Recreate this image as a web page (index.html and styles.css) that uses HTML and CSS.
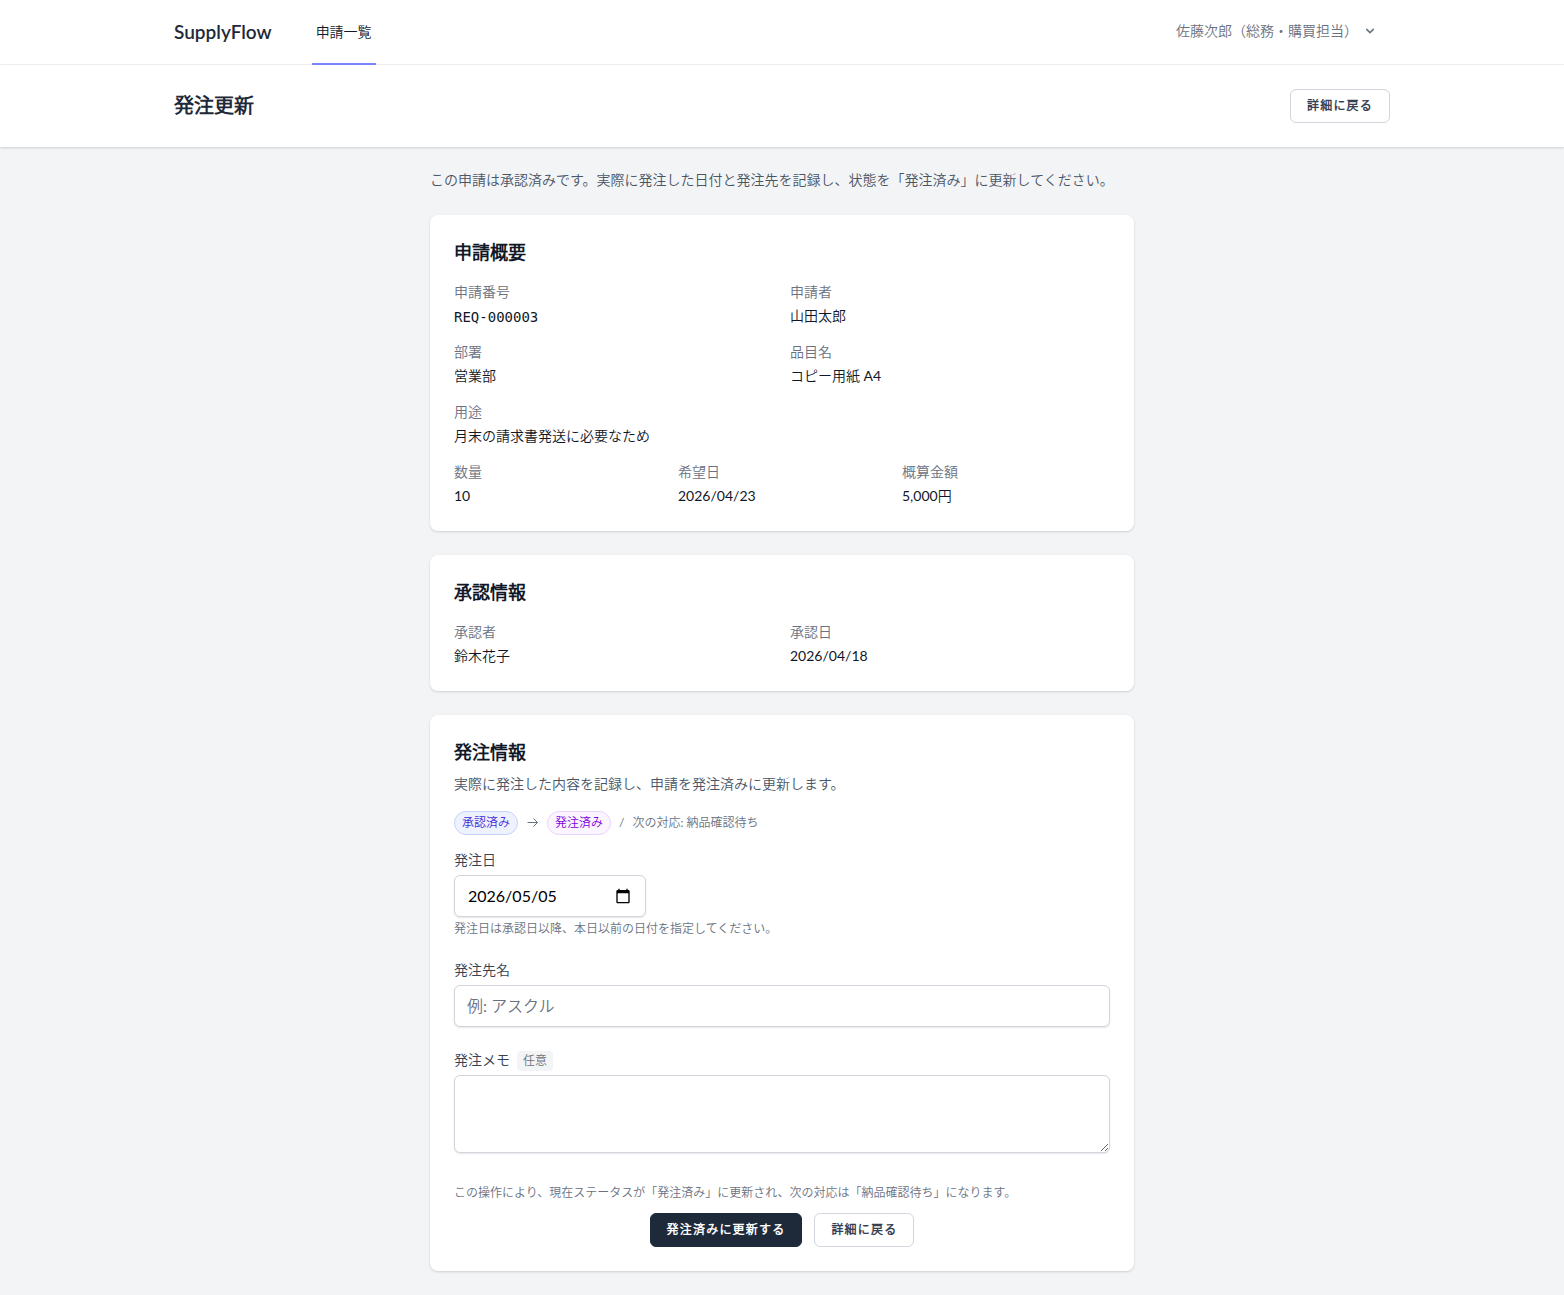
FILE: index.html
```html
<!DOCTYPE html>
<html lang="ja">
    <head>
        <title>発注更新 - SupplyFlow</title>
        <meta charset="UTF-8">
        <meta name="viewport" content="width=device-width, initial-scale=1.0">
        <link rel="stylesheet" href="styles.css">
    </head>

    <body>

        <nav class="navbar">
            <div class="container navbar-inner">
                <a class="logo" href="#">SupplyFlow</a>
                <a class="nav-link active" href="#">申請一覧</a>
                <button type="button" class="user-menu">
                    佐藤次郎（総務・購買担当）
                    <svg class="chevron" viewBox="0 0 20 20" fill="currentColor" aria-hidden="true">
                        <path fill-rule="evenodd" clip-rule="evenodd" d="M5.293 7.293a1 1 0 011.414 0L10 10.586l3.293-3.293a1 1 0 111.414 1.414l-4 4a1 1 0 01-1.414 0l-4-4a1 1 0 010-1.414z"/>
                    </svg>
                </button>
            </div>
        </nav>

        <header class="page-header">
            <div class="container page-header-inner">
                <h1>発注更新</h1>
                <a class="btn" href="#">詳細に戻る</a>
            </div>
        </header>

        <main class="content">
            <p class="lead">この申請は承認済みです。実際に発注した日付と発注先を記録し、状態を「発注済み」に更新してください。</p>

            <section class="card">
                <h2>申請概要</h2>
                <dl class="details">
                    <div class="half"><dt>申請番号</dt><dd class="mono">REQ-000003</dd></div>
                    <div class="half"><dt>申請者</dt><dd>山田太郎</dd></div>
                    <div class="half"><dt>部署</dt><dd>営業部</dd></div>
                    <div class="half"><dt>品目名</dt><dd>コピー用紙 A4</dd></div>
                    <div class="full"><dt>用途</dt><dd>月末の請求書発送に必要なため</dd></div>
                    <div class="third"><dt>数量</dt><dd>10</dd></div>
                    <div class="third"><dt>希望日</dt><dd>2026/04/23</dd></div>
                    <div class="third"><dt>概算金額</dt><dd>5,000円</dd></div>
                </dl>
            </section>

            <section class="card">
                <h2>承認情報</h2>
                <dl class="details">
                    <div class="half"><dt>承認者</dt><dd>鈴木花子</dd></div>
                    <div class="half"><dt>承認日</dt><dd>2026/04/18</dd></div>
                </dl>
            </section>

            <section class="card">
                <h2>発注情報</h2>
                <p class="description">実際に発注した内容を記録し、申請を発注済みに更新します。</p>

                <div class="status-flow">
                    <span class="badge badge-approved">承認済み</span>
                    <svg class="arrow" viewBox="0 0 13 12" fill="none" stroke="currentColor" aria-hidden="true">
                        <path d="M1.5 5.5h10M7.5 1.5l4 4-4 4"/>
                    </svg>
                    <span class="badge badge-ordered">発注済み</span>
                    <span>/</span>
                    <span>次の対応: 納品確認待ち</span>
                </div>

                <form>
                    <div class="field">
                        <label for="ordered_on">発注日</label>
                        <div class="input date-box">
                            <input id="ordered_on" name="ordered_on" type="text" inputmode="numeric" value="2026/05/05">
                            <button type="button" aria-label="カレンダーを開く">
                                <svg viewBox="0 0 24 24" fill="currentColor" aria-hidden="true">
                                    <path d="M20 3h-1V1h-2v2H7V1H5v2H4c-1.1 0-2 .9-2 2v16c0 1.1.9 2 2 2h16c1.1 0 2-.9 2-2V5c0-1.1-.9-2-2-2zm0 18H4V8h16v13z"/>
                                </svg>
                            </button>
                        </div>
                        <p class="hint">発注日は承認日以降、本日以前の日付を指定してください。</p>
                    </div>

                    <div class="field">
                        <label for="supplier">発注先名</label>
                        <input class="input" id="supplier" name="supplier" type="text" placeholder="例: アスクル">
                    </div>

                    <div class="field">
                        <div class="label-row">
                            <label for="memo">発注メモ</label>
                            <span class="optional">任意</span>
                        </div>
                        <textarea class="input textarea" id="memo" name="memo" rows="3"></textarea>
                    </div>

                    <p class="note">この操作により、現在ステータスが「発注済み」に更新され、次の対応は「納品確認待ち」になります。</p>

                    <div class="actions">
                        <button type="submit" class="btn btn-primary">発注済みに更新する</button>
                        <a class="btn" href="#">詳細に戻る</a>
                    </div>
                </form>
            </section>
        </main>

    </body>
</html>
```
FILE: styles.css
```css
* { box-sizing: border-box; }

body {
    margin: 0;
    background: #f3f4f6;
    color: #101828;
    font-family: Lato, "Noto Sans CJK JP DemiLight", "Noto Sans CJK JP", sans-serif;
    font-size: 14px;
    line-height: 20px;
}

h1, h2, p, dl, dd { margin: 0; }

a { color: inherit; text-decoration: none; }

button, input, textarea { font-family: inherit; }

.container {
    max-width: 1280px;
    margin: 0 auto;
    padding: 0 32px;
}

/* navigation */
.navbar {
    background: white;
    border-bottom: 1px solid #f0f1f5;
}

.navbar-inner {
    display: flex;
    height: 64px;
}

.logo {
    align-self: center;
    margin-right: 40px;
    color: #1e2939;
    font-size: 19px;
    font-weight: 600;
    line-height: 28px;
}

.nav-link {
    display: flex;
    align-items: center;
    margin-bottom: -1px;
    padding: 0 4px;
    border-bottom: 2px solid transparent;
}

.nav-link.active { border-color: #7c86ff; }

.user-menu {
    display: flex;
    align-items: center;
    gap: 4px;
    margin-left: auto;
    padding: 0 12px 2px;
    border: 0;
    background: none;
    color: #6a7282;
    font-size: 14px;
    line-height: 20px;
}

.chevron {
    width: 16px;
    height: 16px;
}

/* page heading */
.page-header {
    position: relative;
    background: white;
    box-shadow: 0 1px 3px rgba(0, 0, 0, 0.1), 0 1px 2px rgba(0, 0, 0, 0.06);
}

.page-header-inner {
    display: flex;
    justify-content: space-between;
    align-items: center;
    padding: 24px 32px;
}

h1, h2 {
    padding-bottom: 2px;
    font-weight: 600;
    line-height: 26px;
}

h1 {
    color: #1e2939;
    font-size: 20px;
}

h2 { font-size: 18px; }

/* main column */
.content {
    display: flex;
    flex-direction: column;
    gap: 24px;
    max-width: 768px;
    margin: 0 auto;
    padding: 24px 32px;
}

.lead, .description, dt, dd, label {
    padding-bottom: 2px;
    line-height: 18px;
}

.lead, .description { color: #4a5565; }

.card {
    padding: 24px;
    border-radius: 8px;
    background: white;
    box-shadow: 0 1px 3px rgba(0, 0, 0, 0.1), 0 1px 2px rgba(0, 0, 0, 0.06);
}

.details {
    display: grid;
    grid-template-columns: repeat(6, 1fr);
    gap: 16px;
    margin-top: 16px;
}

.half { grid-column: span 3; }
.third { grid-column: span 2; }
.full { grid-column: span 6; }

dt { color: #6a7282; }
dd { margin-top: 4px; }

.mono {
    padding-bottom: 0;
    font-family: "DejaVu Sans Mono", monospace;
    line-height: 20px;
}

/* order form */
.description { margin-top: 8px; }

.status-flow {
    display: flex;
    align-items: center;
    gap: 8px;
    margin: 16px 0;
    color: #6a7282;
    font-size: 12px;
    line-height: 16px;
}

.badge {
    padding: 3px 7px;
    border: 1px solid;
    border-radius: 12px;
}

.badge-approved {
    border-color: #c6d2ff;
    background: #eef2ff;
    color: #432dd7;
}

.badge-ordered {
    border-color: #e9d4ff;
    background: #faf5ff;
    color: #8200db;
}

.arrow {
    width: 13px;
    height: 12px;
}

.field { margin-bottom: 24px; }

label {
    display: block;
    color: #364153;
}

.label-row {
    display: flex;
    gap: 7px;
}

.optional {
    padding: 2px 6px;
    border-radius: 4px;
    background: #f3f4f6;
    color: #6a7282;
    font-size: 12px;
    line-height: 16px;
}

.input {
    display: block;
    width: 100%;
    height: 42px;
    margin-top: 4px;
    padding: 7px 12px 9px;
    border: 1px solid #d1d5dc;
    border-radius: 6px;
    background: white;
    box-shadow: 0 1px 2px rgba(0, 0, 0, 0.1);
    color: black;
    font-size: 16px;
    line-height: 24px;
}

.input::placeholder { color: #6a7282; }

.date-box {
    display: flex;
    align-items: center;
    width: 192px;
    padding: 0 14px 0 13px;
}

.date-box input {
    flex: 1;
    min-width: 0;
    padding: 0;
    border: 0;
    background: none;
    color: inherit;
    font-size: 16px;
    line-height: 24px;
}

.date-box button {
    display: flex;
    padding: 0;
    border: 0;
    background: none;
    color: black;
}

.date-box svg {
    width: 16px;
    height: 16px;
}

.textarea {
    height: auto;
    font-size: 14px;
    line-height: 20px;
}

.hint, .note {
    color: #6a7282;
    font-size: 12px;
    line-height: 16px;
}

.hint { margin-top: 4px; }
.note { margin-top: 32px; }

.actions {
    display: flex;
    justify-content: center;
    gap: 12px;
    margin-top: 12px;
}

.btn {
    padding: 8px 16px;
    border: 1px solid #d1d5dc;
    border-radius: 6px;
    background: white;
    color: #364153;
    font-size: 12px;
    font-weight: 600;
    letter-spacing: 0.1em;
    line-height: 16px;
}

.btn-primary {
    border-color: #1e2939;
    background: #1e2939;
    color: white;
}
```
